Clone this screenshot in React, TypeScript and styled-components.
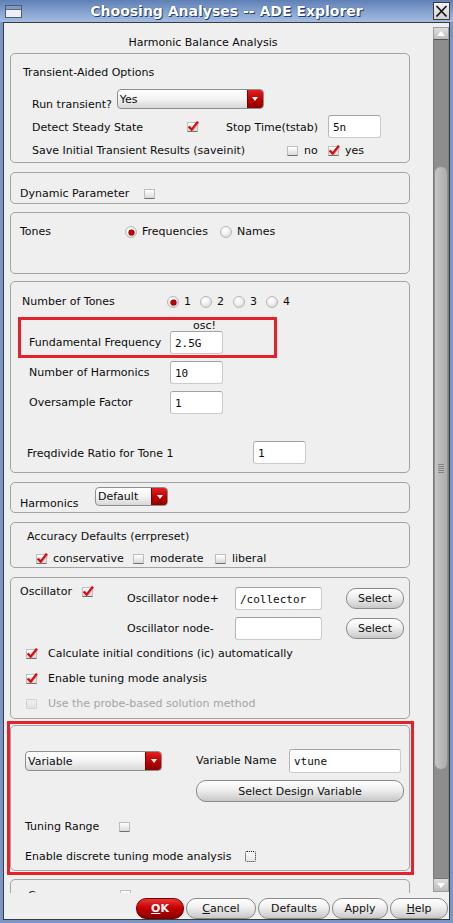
import React from "react";
import styled, { createGlobalStyle, css } from "styled-components";

const GlobalStyle = createGlobalStyle`
  html, body { margin: 0; padding: 0; }
  body {
    width: 453px; height: 923px; overflow: hidden; background: #7896c8;
    font-family: "DejaVu Sans", "Liberation Sans", sans-serif; font-size: 11px; color: #0c0c0c;
  }
  *, *::before, *::after { box-sizing: border-box; }
`;

const Window = styled.div`
  width: 453px; height: 923px; display: flex; flex-direction: column; background: #7896c8;
`;

const TitleBar = styled.div`
  flex: none; height: 22px; display: grid; grid-template-columns: 24px 1fr 24px; align-items: center;
  background: linear-gradient(to bottom, #5f80b6 0%, #7f9dcc 45%, #a4bce1 100%);
`;

const TitleText = styled.div`
  text-align: center; color: #fff; font-weight: bold; font-size: 14px; line-height: 22px;
  text-shadow: 1px 1px 0 #2a3d60, 0 0 1px #2a3d60;
  white-space: nowrap;
`;

const TitleCell = styled.div<{ $end?: boolean }>`
  display: flex; align-items: center; height: 22px;
  justify-content: ${(p) => (p.$end ? "flex-end" : "flex-start")};
  padding: ${(p) => (p.$end ? "0 3px 0 0" : "0 0 0 5px")};
`;

const Frame = styled.div`
  flex: 1; min-height: 0; display: flex; padding: 0 3px 3px; background: #7896c8;
`;

const Body = styled.div`
  flex: 1; min-width: 0; display: flex; flex-direction: column;
  border: 1px solid #3b3b3b; background: #efefef;
`;

const Main = styled.div`
  flex: 1; min-height: 0; display: flex;
`;

const Viewport = styled.div`
  flex: 1; min-width: 0; overflow: hidden;
`;

const Content = styled.div`
  display: flex; flex-direction: column; align-items: flex-start; padding-left: 6px;
`;

const Header = styled.div`
  flex: none; width: 400px; height: 30px; padding: 12px 14px 0 0;
  line-height: 16px; text-align: center; white-space: nowrap;
`;

const Panel = styled.div<{ $h: number; $mt?: number; $pt?: number }>`
  flex: none; width: 400px; height: ${(p) => p.$h}px;
  margin-top: ${(p) => p.$mt ?? 0}px; padding-top: ${(p) => p.$pt ?? 0}px;
  border: 1px solid #a3a3a3; border-radius: 5px;
  display: flex; flex-direction: column; overflow: hidden;
`;

const Highlight = styled.div<{ $mt?: number; $ml?: number; $w: number; $h: number }>`
  flex: none; width: ${(p) => p.$w}px; height: ${(p) => p.$h}px;
  margin-top: ${(p) => p.$mt ?? 0}px; margin-left: ${(p) => p.$ml ?? 0}px;
  border: 3px solid #e4222c;
`;

const TuneFrame = styled(Highlight)`
  padding: 1px 0;
`;

const FreqFrame = styled(Highlight)`
  display: flex; align-items: flex-end; padding: 0 0 1px 8px;
`;

const Row = styled.div<{ $mt?: number; $pl?: number; $h?: number; $top?: boolean }>`
  flex: none; display: flex; align-items: ${(p) => (p.$top ? "flex-start" : "center")};
  margin-top: ${(p) => p.$mt ?? 0}px; padding-left: ${(p) => p.$pl ?? 0}px;
  ${(p) => p.$h !== undefined && css`height: ${p.$h}px;`}
`;

const Label = styled.span<{ $w?: number; $ml?: number; $mt?: number; $muted?: boolean }>`
  display: block; flex: none; line-height: 16px; white-space: nowrap;
  ${(p) => p.$w !== undefined && css`width: ${p.$w}px;`}
  margin-left: ${(p) => p.$ml ?? 0}px; margin-top: ${(p) => p.$mt ?? 0}px;
  color: ${(p) => (p.$muted ? "#a4a4a4" : "inherit")};
`;

const FieldLabel = styled.span<{ $w: number }>`
  display: flex; align-items: center; flex: none; width: ${(p) => p.$w}px; height: 23px; white-space: nowrap;
`;

const FieldColumn = styled.div`
  display: flex; flex-direction: column; flex: none;
`;

const Note = styled.span`
  display: block; height: 11px; line-height: 11px; padding-left: 23px; margin-top: -1px;
`;

const Field = styled.div<{ $w: number; $h?: number }>`
  flex: none; width: ${(p) => p.$w}px; height: ${(p) => p.$h ?? 23}px;
  display: flex; align-items: center; padding-left: 4px; padding-top: 1px;
  background: #fff; border: 1px solid #cbcbcb; border-top-color: #a2a2a2; border-left-color: #b6b6b6;
  border-radius: 3px;
  font-family: "DejaVu Sans Mono", "Liberation Mono", monospace; font-size: 11px; white-space: nowrap;
`;

const Box = styled.span<{ $ml?: number; $mt?: number; $dotted?: boolean; $disabled?: boolean }>`
  position: relative; display: block; flex: none;
  width: 11px; height: 10px;
  margin-left: ${(p) => p.$ml ?? 0}px; margin-top: ${(p) => p.$mt ?? 0}px;
  border: 1px solid #bdbdbd; border-bottom-color: #6e6e6e; border-radius: 1px;
  background: linear-gradient(#ffffff, #dadada);
  ${(p) =>
    p.$dotted &&
    css`
      height: 11px; border: 1px dotted #1e1e1e; border-radius: 2px; background: linear-gradient(#fbfbfb, #e6e6e6);
    `}
  ${(p) =>
    p.$disabled &&
    css`
      border-color: #d2d2d2; background: linear-gradient(#f0f0f0, #e2e2e2);
    `}
`;

const Tick = styled.svg`
  position: absolute; left: -1px; top: -3px; overflow: visible;
`;

function Check(props: { on?: boolean; ml?: number; mt?: number; dotted?: boolean; disabled?: boolean }) {
  return (
    <Box $ml={props.ml} $mt={props.mt} $dotted={props.dotted} $disabled={props.disabled}>
      {props.on && (
        <Tick width="12" height="12" viewBox="0 0 12 12">
          <path d="M1.6 6.4 L4.6 9.6 L10.8 1.6" fill="none" stroke="#f08a8a" strokeWidth="2.4" strokeLinejoin="miter" transform="translate(0.6,0.4)" />
          <path d="M1.6 6.4 L4.6 9.6 L10.8 1.6" fill="none" stroke="#d10f14" strokeWidth="2.2" strokeLinejoin="miter" />
        </Tick>
      )}
    </Box>
  );
}

const Radio = styled.span<{ $on?: boolean; $ml?: number }>`
  position: relative; display: block; flex: none;
  width: 12px; height: 12px; border-radius: 50%;
  margin-left: ${(p) => p.$ml ?? 0}px;
  border: 1px solid #b9b9b9;
  background: radial-gradient(circle at 40% 35%, #ffffff 0%, #f0f0f0 45%, #c6c6c6 100%);
  ${(p) =>
    p.$on &&
    css`
      &::after {
        content: ""; position: absolute; left: 2.5px; top: 2.5px; width: 5px; height: 5px; border-radius: 50%;
        background: #c80000; box-shadow: 0 0 0 0.6px #700000;
      }
    `}
`;

const Combo = styled.div<{ $w: number; $h: number; $ml?: number }>`
  flex: none; display: flex; width: ${(p) => p.$w}px; height: ${(p) => p.$h}px;
  margin-left: ${(p) => p.$ml ?? 0}px;
  border: 1px solid #8e8e8e; border-radius: 4px; overflow: hidden;
  background: linear-gradient(#ffffff 0%, #f3f3f3 50%, #d8d8d8 100%);
`;

const ComboText = styled.span`
  flex: 1; display: flex; align-items: center; padding-left: 2px; white-space: nowrap;
`;

const ComboArrow = styled.span`
  flex: none; width: 16px; display: flex; align-items: center; justify-content: center;
  background: linear-gradient(#e42020 0%, #bb0000 55%, #8e0000 100%);
  border-left: 1px solid #7a0000;
  &::after {
    content: ""; width: 0; height: 0;
    border-left: 3.5px solid transparent; border-right: 3.5px solid transparent; border-top: 4px solid #fff;
  }
`;

function Dropdown(props: { w: number; h: number; ml?: number; children: React.ReactNode }) {
  return (
    <Combo $w={props.w} $h={props.h} $ml={props.ml}>
      <ComboText>{props.children}</ComboText>
      <ComboArrow />
    </Combo>
  );
}

const Pill = styled.div<{ $w: number; $h?: number; $ml?: number; $primary?: boolean }>`
  flex: none; width: ${(p) => p.$w}px; height: ${(p) => p.$h ?? 21}px;
  margin-left: ${(p) => p.$ml ?? 0}px;
  display: flex; align-items: center; justify-content: center;
  border: 1px solid #8a8a8a; border-radius: 10px;
  background: linear-gradient(to bottom, #ffffff 0%, #f1f1f1 40%, #dadada 75%, #c8c8c8 100%);
  color: #111; font-size: 11px; white-space: nowrap;
  ${(p) =>
    p.$primary &&
    css`
      border-color: #760000; color: #fff; font-weight: bold;
      background: linear-gradient(to bottom, #e53a3a 0%, #c80000 45%, #a00000 80%, #8a0000 100%);
    `}
`;

const OscGrid = styled.div`
  display: grid; grid-template-columns: 108px 111px 58px; grid-auto-rows: 23px;
  row-gap: 7px; align-items: center; margin-top: 3px; margin-left: 34px;
`;

const ButtonBar = styled.div`
  flex: none; height: 26px; display: flex; justify-content: flex-end; align-items: flex-end;
  gap: 2px; padding-right: 1px;
`;

const ScrollBar = styled.div`
  flex: none; width: 16px; display: flex; flex-direction: column; padding: 4px 0 1px;
`;

const ArrowBtn = styled.div<{ $down?: boolean }>`
  flex: none; height: ${(p) => (p.$down ? 14 : 13)}px;
  display: flex; align-items: center; justify-content: center;
  background: linear-gradient(#dedede, #bcbcbc);
  border: 1px solid #9c9c9c;
  ${(p) => (p.$down ? css`border-top-color: #777;` : css`border-bottom-color: #555;`)}
  &::after {
    content: ""; width: 0; height: 0;
    border-left: 4px solid transparent; border-right: 4px solid transparent;
    ${(p) => (p.$down ? css`border-top: 5px solid #fff;` : css`border-bottom: 5px solid #fff;`)}
  }
`;

const Track = styled.div`
  flex: 1; min-height: 0; display: flex; flex-direction: column;
  background: #8d8d8d; border-left: 1px solid #777; border-right: 1px solid #7f7f7f;
`;

const Thumb = styled.div<{ $top: number; $h: number }>`
  flex: none; margin-top: ${(p) => p.$top}px; height: ${(p) => p.$h}px;
  border: 1px solid #929292; border-radius: 7px;
  background: linear-gradient(to right, #c6c6c6, #b6b6b6 60%, #adadad);
  display: flex; flex-direction: column; align-items: center; justify-content: center; gap: 1px;
`;

const Grip = styled.span`
  display: block; width: 6px; height: 1px; background: #838383;
`;

export default function App() {
  return (
    <>
      <GlobalStyle />
      <Window>
        <TitleBar>
          <TitleCell>
            <svg width="17" height="13" viewBox="0 0 17 13">
              <rect x="0.5" y="0.5" width="16" height="12" fill="#eceef2" stroke="#4d5d77" />
              <rect x="1" y="1" width="15" height="3" fill="#7f9bc4" />
              <line x1="1" y1="4.5" x2="16" y2="4.5" stroke="#5b6c88" />
            </svg>
          </TitleCell>
          <TitleText>Choosing Analyses -- ADE Explorer</TitleText>
          <TitleCell $end>
            <svg width="17" height="18" viewBox="0 0 17 18">
              <defs>
                <linearGradient id="cg" x1="0" y1="0" x2="0" y2="1">
                  <stop offset="0" stopColor="#f4f4f4" />
                  <stop offset="1" stopColor="#cfcfcf" />
                </linearGradient>
              </defs>
              <rect x="0.5" y="0.5" width="16" height="17" fill="url(#cg)" stroke="#3c3c3c" />
              <path d="M3.5 4 L13.5 14.5 M13.5 4 L3.5 14.5" stroke="#111" strokeWidth="1.7" />
            </svg>
          </TitleCell>
        </TitleBar>
        <Frame>
          <Body>
            <Main>
              <Viewport>
                <Content>
                  <Header>Harmonic Balance Analysis</Header>

                  <Panel $h={110} $pt={11}>
                    <Label $ml={12}>Transient-Aided Options</Label>
                    <Row $mt={8} $pl={21} $h={20} $top>
                      <Label $mt={8}>Run transient?</Label>
                      <Dropdown w={147} h={20} ml={5}>Yes</Dropdown>
                    </Row>
                    <Row $mt={6} $pl={21} $h={23}>
                      <Label $w={155} $mt={2}>Detect Steady State</Label>
                      <Check on />
                      <Label $ml={28} $w={102} $mt={2}>Stop Time(tstab)</Label>
                      <Field $w={53}>5n</Field>
                    </Row>
                    <Row $mt={5} $pl={21}>
                      <Label $w={255}>Save Initial Transient Results (saveinit)</Label>
                      <Check />
                      <Label $ml={6} $w={24}>no</Label>
                      <Check on />
                      <Label $ml={6}>yes</Label>
                    </Row>
                  </Panel>

                  <Panel $h={32} $mt={9} $pt={13}>
                    <Row $pl={9}>
                      <Label $w={124}>Dynamic Parameter</Label>
                      <Check mt={-1} />
                    </Row>
                  </Panel>

                  <Panel $h={62} $mt={8} $pt={11}>
                    <Row $pl={9}>
                      <Label $w={105}>Tones</Label>
                      <Radio $on />
                      <Label $ml={5} $w={78}>Frequencies</Label>
                      <Radio />
                      <Label $ml={5}>Names</Label>
                    </Row>
                  </Panel>

                  <Panel $h={192} $mt={7} $pt={12}>
                    <Row $pl={11}>
                      <Label $w={145}>Number of Tones</Label>
                      <Radio $on />
                      <Label $ml={5} $w={16}>1</Label>
                      <Radio />
                      <Label $ml={5} $w={16}>2</Label>
                      <Radio />
                      <Label $ml={5} $w={16}>3</Label>
                      <Radio />
                      <Label $ml={5} $w={16}>4</Label>
                    </Row>
                    <FreqFrame $mt={7} $ml={7} $w={259} $h={41}>
                      <FieldLabel $w={141}>Fundamental Frequency</FieldLabel>
                      <FieldColumn>
                        <Note>osc!</Note>
                        <Field $w={53}>2.5G</Field>
                      </FieldColumn>
                    </FreqFrame>
                    <Row $mt={3} $pl={18} $h={23}>
                      <Label $w={141}>Number of Harmonics</Label>
                      <Field $w={53}>10</Field>
                    </Row>
                    <Row $mt={7} $pl={18} $h={23}>
                      <Label $w={141}>Oversample Factor</Label>
                      <Field $w={53}>1</Field>
                    </Row>
                    <Row $mt={27} $pl={16} $h={23}>
                      <Label $w={226} $mt={2}>Freqdivide Ratio for Tone 1</Label>
                      <Field $w={53}>1</Field>
                    </Row>
                  </Panel>

                  <Panel $h={31} $mt={9} $pt={4}>
                    <Row $pl={9} $top>
                      <Label $w={75} $mt={9}>Harmonics</Label>
                      <Dropdown w={73} h={19}>Default</Dropdown>
                    </Row>
                  </Panel>

                  <Panel $h={46} $mt={9} $pt={6}>
                    <Label $ml={16}>Accuracy Defaults (errpreset)</Label>
                    <Row $mt={6} $pl={25}>
                      <Check on />
                      <Label $ml={6} $w={80}>conservative</Label>
                      <Check />
                      <Label $ml={6} $w={65}>moderate</Label>
                      <Check />
                      <Label $ml={6}>liberal</Label>
                    </Row>
                  </Panel>

                  <Panel $h={142} $mt={9} $pt={6}>
                    <Row $pl={9} $top>
                      <Label $w={62}>Oscillator</Label>
                      <Check on mt={3} />
                      <OscGrid>
                        <Label>Oscillator node+</Label>
                        <Field $w={87}>/collector</Field>
                        <Pill $w={58}>Select</Pill>
                        <Label>Oscillator node-</Label>
                        <Field $w={87} />
                        <Pill $w={58}>Select</Pill>
                      </OscGrid>
                    </Row>
                    <Row $mt={6} $pl={15}>
                      <Check on />
                      <Label $ml={11}>Calculate initial conditions (ic) automatically</Label>
                    </Row>
                    <Row $mt={9} $pl={15}>
                      <Check on />
                      <Label $ml={11}>Enable tuning mode analysis</Label>
                    </Row>
                    <Row $mt={9} $pl={15}>
                      <Check disabled />
                      <Label $ml={11} $muted>Use the probe-based solution method</Label>
                    </Row>
                  </Panel>

                  <TuneFrame $mt={2} $ml={-3} $w={407} $h={154}>
                    <Panel $h={146} $pt={23}>
                      <Row $pl={14} $h={24}>
                        <Dropdown w={137} h={20}>Variable</Dropdown>
                        <Label $ml={34} $w={93}>Variable Name</Label>
                        <Field $w={112} $h={24}>vtune</Field>
                      </Row>
                      <Row $mt={7} $pl={185}>
                        <Pill $w={208} $h={22}>Select Design Variable</Pill>
                      </Row>
                      <Row $mt={17} $pl={14}>
                        <Label $w={94}>Tuning Range</Label>
                        <Check mt={-1} />
                      </Row>
                      <Row $mt={14} $pl={14}>
                        <Label $w={220}>Enable discrete tuning mode analysis</Label>
                        <Check dotted mt={-1} />
                      </Row>
                    </Panel>
                  </TuneFrame>

                  <Panel $h={60} $mt={4} $pt={8}>
                    <Row $pl={17}>
                      <Label $w={92}>Convergence</Label>
                      <Check mt={-2} />
                    </Row>
                  </Panel>
                </Content>
              </Viewport>
              <ScrollBar>
                <ArrowBtn />
                <Track>
                  <Thumb $top={126} $h={604}>
                    <Grip />
                    <Grip />
                    <Grip />
                    <Grip />
                    <Grip />
                  </Thumb>
                </Track>
                <ArrowBtn $down />
              </ScrollBar>
            </Main>
            <ButtonBar>
              <Pill $w={48} $primary>
                <u>O</u>K
              </Pill>
              <Pill $w={70}>
                <u>C</u>ancel
              </Pill>
              <Pill $w={72}>Defaults</Pill>
              <Pill $w={56}>Apply</Pill>
              <Pill $w={58}>
                <u>H</u>elp
              </Pill>
            </ButtonBar>
          </Body>
        </Frame>
      </Window>
    </>
  );
}
